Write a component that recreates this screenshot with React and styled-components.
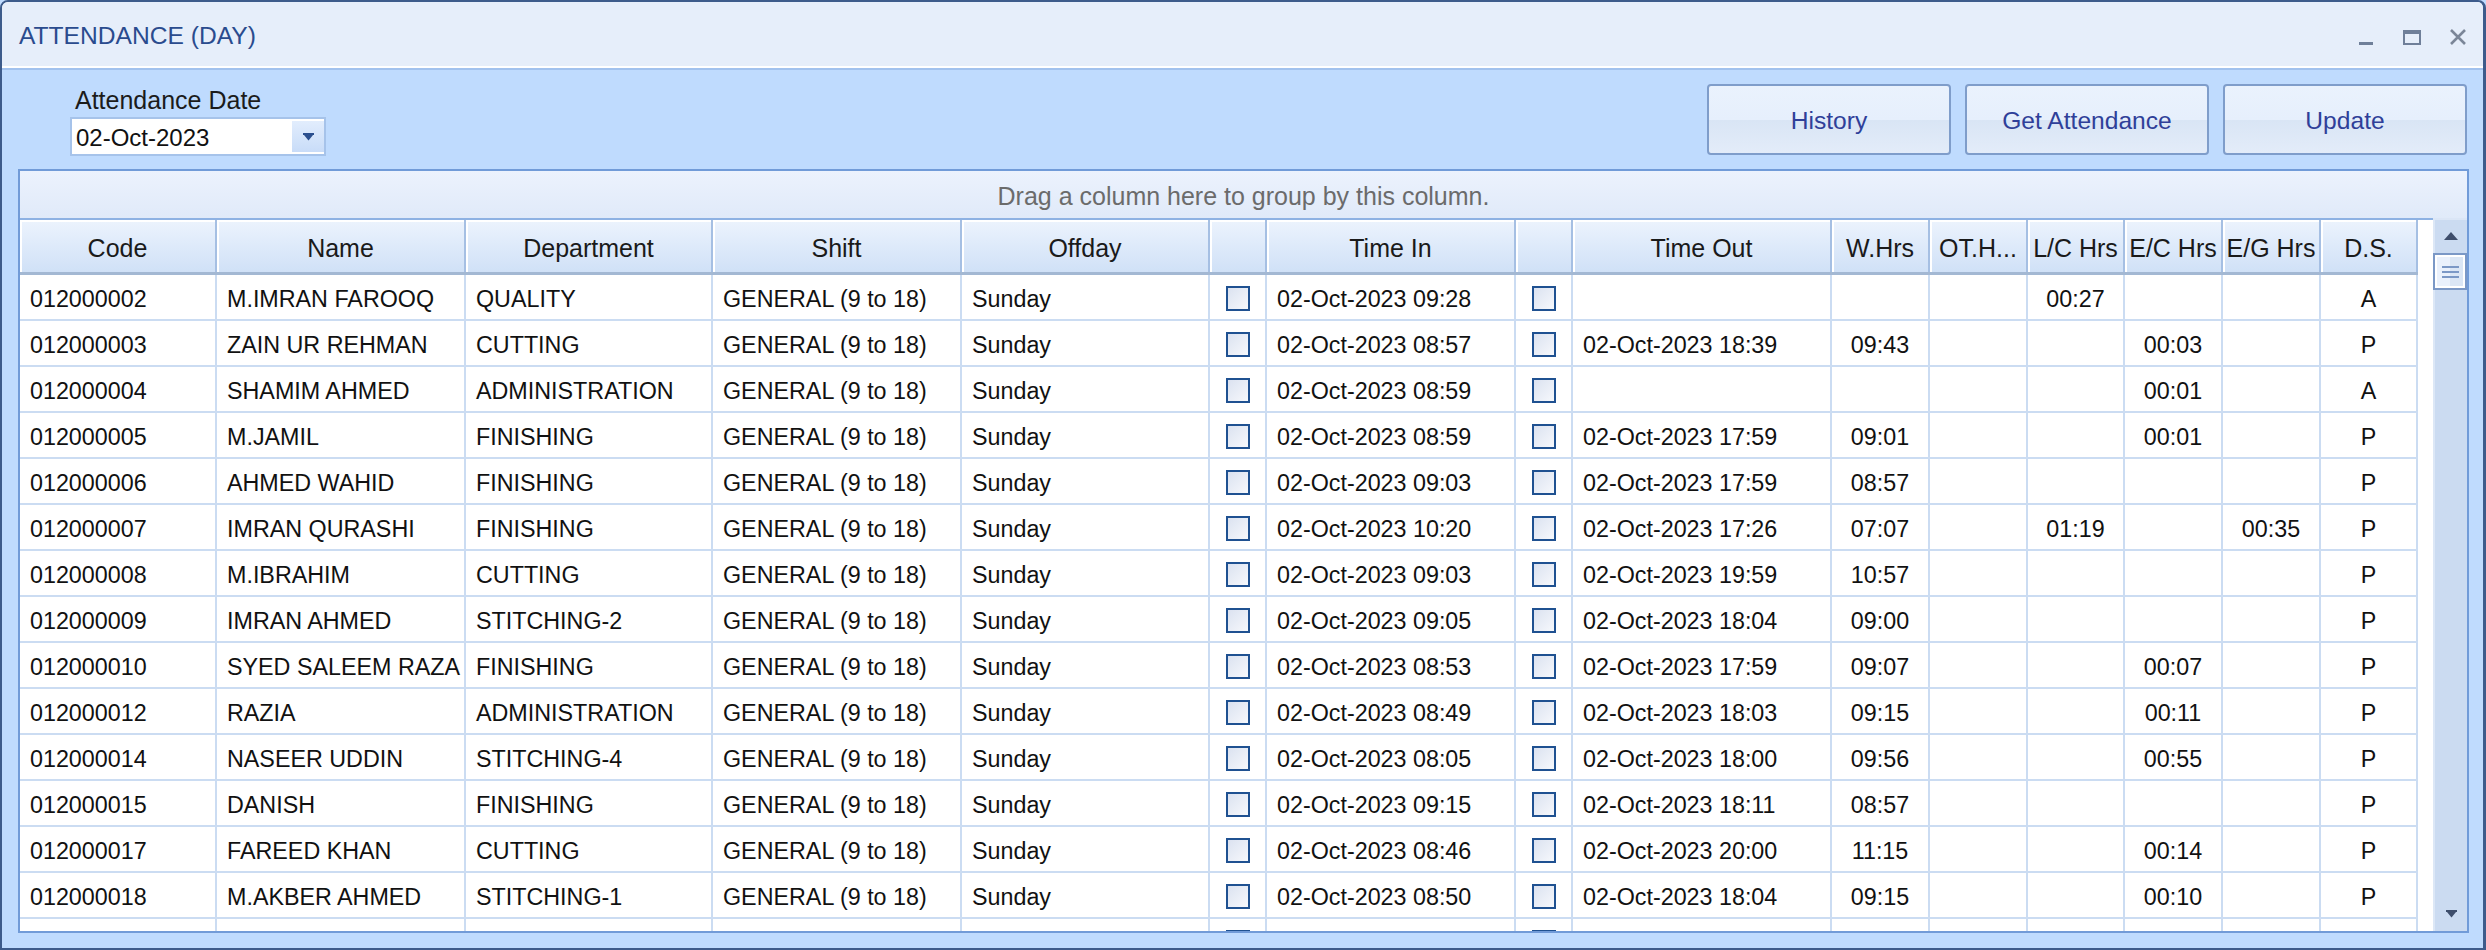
import React from "react";
import styled, { createGlobalStyle } from "styled-components";

const FONT = `"Liberation Sans", Arial, Helvetica, sans-serif`;

const GlobalStyle = createGlobalStyle`
  html, body {
    margin: 0;
    padding: 0;
  }
  body {
    font-family: ${FONT};
    background: #bfdbfe;
    overflow: hidden;
  }
  * {
    box-sizing: border-box;
  }
`;

const COLUMNS = [
  { key: "code", title: "Code", width: 197 },
  { key: "name", title: "Name", width: 249 },
  { key: "dept", title: "Department", width: 247 },
  { key: "shift", title: "Shift", width: 249 },
  { key: "offday", title: "Offday", width: 248 },
  { key: "chkIn", title: "", width: 57, type: "check" },
  { key: "timeIn", title: "Time In", width: 249 },
  { key: "chkOut", title: "", width: 57, type: "check" },
  { key: "timeOut", title: "Time Out", width: 259 },
  { key: "wHrs", title: "W.Hrs", width: 98, align: "center" },
  { key: "otHrs", title: "OT.H...", width: 98, align: "center" },
  { key: "lcHrs", title: "L/C Hrs", width: 97, align: "center" },
  { key: "ecHrs", title: "E/C Hrs", width: 98, align: "center" },
  { key: "egHrs", title: "E/G Hrs", width: 98, align: "center" },
  { key: "ds", title: "D.S.", width: 97, align: "center" },
];

const TEMPLATE = COLUMNS.map((c) => `${c.width}px`).join(" ");

const SHIFT = "GENERAL (9 to 18)";
const DAY = "02-Oct-2023";

// code, name, dept, in, out, w, ot, lc, ec, eg, ds
const RAW = [
  ["012000002", "M.IMRAN FAROOQ", "QUALITY", "09:28", "", "", "", "00:27", "", "", "A"],
  ["012000003", "ZAIN UR REHMAN", "CUTTING", "08:57", "18:39", "09:43", "", "", "00:03", "", "P"],
  ["012000004", "SHAMIM AHMED", "ADMINISTRATION", "08:59", "", "", "", "", "00:01", "", "A"],
  ["012000005", "M.JAMIL", "FINISHING", "08:59", "17:59", "09:01", "", "", "00:01", "", "P"],
  ["012000006", "AHMED WAHID", "FINISHING", "09:03", "17:59", "08:57", "", "", "", "", "P"],
  ["012000007", "IMRAN QURASHI", "FINISHING", "10:20", "17:26", "07:07", "", "01:19", "", "00:35", "P"],
  ["012000008", "M.IBRAHIM", "CUTTING", "09:03", "19:59", "10:57", "", "", "", "", "P"],
  ["012000009", "IMRAN AHMED", "STITCHING-2", "09:05", "18:04", "09:00", "", "", "", "", "P"],
  ["012000010", "SYED SALEEM RAZA", "FINISHING", "08:53", "17:59", "09:07", "", "", "00:07", "", "P"],
  ["012000012", "RAZIA", "ADMINISTRATION", "08:49", "18:03", "09:15", "", "", "00:11", "", "P"],
  ["012000014", "NASEER UDDIN", "STITCHING-4", "08:05", "18:00", "09:56", "", "", "00:55", "", "P"],
  ["012000015", "DANISH", "FINISHING", "09:15", "18:11", "08:57", "", "", "", "", "P"],
  ["012000017", "FAREED KHAN", "CUTTING", "08:46", "20:00", "11:15", "", "", "00:14", "", "P"],
  ["012000018", "M.AKBER AHMED", "STITCHING-1", "08:50", "18:04", "09:15", "", "", "00:10", "", "P"],
];

const ROWS = RAW.map((r) => ({
  code: r[0],
  name: r[1],
  dept: r[2],
  shift: SHIFT,
  offday: "Sunday",
  timeIn: r[3] ? `${DAY} ${r[3]}` : "",
  timeOut: r[4] ? `${DAY} ${r[4]}` : "",
  wHrs: r[5],
  otHrs: r[6],
  lcHrs: r[7],
  ecHrs: r[8],
  egHrs: r[9],
  ds: r[10],
}));

// the next record is scrolled below the edge, only its top few pixels show
ROWS.push({ code: "next" });

const Window = styled.div`
  width: 2486px;
  height: 950px;
  display: flex;
  flex-direction: column;
  border: 2px solid #3d5b8b;
  border-right-width: 3px;
  border-radius: 8px 8px 0 0;
  overflow: hidden;
  background: #e6eefa;
`;

const TitleBar = styled.div`
  height: 66px;
  flex: none;
  display: flex;
  align-items: center;
  justify-content: space-between;
  padding: 4px 16px 0 17px;
  background: #e6eefa;
  border-bottom: 2px solid #ffffff;
`;

const Title = styled.div`
  font-size: 24.6px;
  color: #2a4b8e;
`;

const Controls = styled.div`
  display: flex;
  align-items: flex-end;
  height: 16px;
  margin-top: 2px;
`;

const MinIcon = styled.div`
  width: 14px;
  height: 3px;
  background: #6f7f99;
  margin-right: 30px;
`;

const MaxIcon = styled.div`
  width: 18px;
  height: 15px;
  border: 2px solid #6f7f99;
  border-top-width: 4px;
  margin-right: 28px;
`;

const CloseIcon = () => (
  <svg width="18" height="16" viewBox="0 0 18 16">
    <path d="M2 1 L16 15 M16 1 L2 15" stroke="#7b8698" strokeWidth="2.6" />
  </svg>
);

const Body = styled.div`
  flex: 1;
  min-height: 0;
  display: flex;
  flex-direction: column;
  background: #bfdbfe;
  border-top: 2px solid #a2c2ee;
  padding: 0 14px 15px 16px;
`;

const Toolbar = styled.div`
  height: 99px;
  flex: none;
  display: flex;
  justify-content: space-between;
  align-items: flex-end;
  padding: 0 2px 13px 52px;
`;

const DateGroup = styled.div`
  display: flex;
  flex-direction: column;
`;

const FieldLabel = styled.div`
  font-size: 25px;
  line-height: 28px;
  color: #1b1b1b;
  padding-left: 5px;
  margin-bottom: 3px;
`;

const ComboBox = styled.div`
  width: 256px;
  height: 39px;
  display: flex;
  align-items: stretch;
  background: #ffffff;
  border: 2px solid #a6c3ea;
`;

const ComboText = styled.div`
  flex: 1;
  display: flex;
  align-items: center;
  padding: 3px 0 0 4px;
  font-size: 24px;
  color: #111;
`;

const ComboButton = styled.div`
  width: 32px;
  margin: 2px 0;
  display: flex;
  align-items: center;
  justify-content: center;
  background: linear-gradient(#e2edfd, #c8dcf8);
`;

const DropArrow = ({ color = "#2b4f8e" }) => (
  <svg width="11" height="8" viewBox="0 0 11 8">
    <rect x="0" y="0" width="11" height="2" fill={color} />
    <path d="M1 2 H10 L5.5 7.5 Z" fill={color} />
  </svg>
);

const ButtonRow = styled.div`
  display: flex;
  gap: 14px;
  margin-bottom: 1px;
`;

const ActionButton = styled.button`
  width: 244px;
  height: 71px;
  border: 2px solid #7f9dca;
  border-radius: 4px;
  background: linear-gradient(#eaf2fd 0%, #e6effc 50%, #d9e5f5 51%, #e3ecf9 100%);
  font-family: ${FONT};
  font-size: 24.6px;
  color: #2f3f99;
  padding: 3px 0 0;
  cursor: pointer;
`;

const GridPanel = styled.div`
  flex: 1;
  min-height: 0;
  display: flex;
  flex-direction: column;
  border: 2px solid #719bd8;
  background: #ffffff;
  overflow: hidden;
`;

const GroupPanel = styled.div`
  height: 47px;
  flex: none;
  display: flex;
  align-items: center;
  justify-content: center;
  padding-top: 4px;
  background: linear-gradient(#ecf2fd, #e0eaf9);
  color: #6b6b6b;
  font-size: 25px;
`;

const View = styled.div`
  flex: 1;
  min-height: 0;
  display: flex;
`;

const Columns = styled.div`
  width: 2398px;
  flex: none;
  display: flex;
  flex-direction: column;
  overflow: hidden;
`;

const HeaderRow = styled.div`
  display: grid;
  grid-template-columns: ${TEMPLATE};
  height: 57px;
  flex: none;
  border-top: 2px solid #8eb2e3;
  border-bottom: 3px solid #a3b8d3;
`;

const HeaderCell = styled.div`
  display: flex;
  align-items: center;
  justify-content: center;
  padding-top: 4px;
  background: linear-gradient(#ecf3fd, #d0e1f7);
  border-right: 2px solid #a5bfe3;
  box-shadow: inset 2px 2px 0 #ffffff;
  font-size: 25px;
  color: #1a1a1a;
  white-space: nowrap;
  overflow: hidden;
`;

const DataRow = styled.div`
  display: grid;
  grid-template-columns: ${TEMPLATE};
  height: 46px;
  flex: none;
  border-bottom: 2px solid #cbdcf2;
`;

const Cell = styled.div`
  display: flex;
  align-items: center;
  justify-content: ${(p) => (p.$align === "center" ? "center" : "flex-start")};
  padding: ${(p) => (p.$align === "center" ? "4px 0 0" : "4px 0 0 10px")};
  border-right: 2px solid #cbdcf2;
  font-size: 23.3px;
  color: #111;
  white-space: nowrap;
  overflow: hidden;
`;

const CheckBox = styled.div`
  width: 24px;
  height: 25px;
  margin-top: -2px;
  border: 2px solid #1f5191;
  background: linear-gradient(135deg, #dbe2f0, #f6f8fc);
`;

const Filler = styled.div`
  width: 15px;
  flex: none;
  background: #ffffff;
  border-top: 2px solid #8eb2e3;
`;

const ScrollBar = styled.div`
  width: 34px;
  flex: none;
  display: flex;
  flex-direction: column;
  background: #cbdbf1;
  border-left: 2px solid #dce7f6;
  border-top: 2px solid #dbe6f6;
`;

const ScrollArrow = styled.div`
  height: ${(p) => p.$h}px;
  flex: none;
  display: flex;
  align-items: center;
  justify-content: center;
`;

const Thumb = styled.div`
  height: 37px;
  flex: none;
  margin-left: -2px;
  border: 2px solid #7b98c6;
  background: linear-gradient(90deg, #eaf1fc 50%, #dbe6f5 50%);
  box-shadow: inset 0 0 0 2px #ffffff;
  display: flex;
  flex-direction: column;
  align-items: center;
  justify-content: center;
  gap: 3px;
`;

const GripLine = styled.div`
  width: 17px;
  height: 2px;
  background: #7b98c6;
`;

const Track = styled.div`
  flex: 1;
`;

const UpArrow = () => (
  <svg width="14" height="9" viewBox="0 0 14 9">
    <path d="M7 0 L14 8 H0 Z" fill="#3e4e6c" />
  </svg>
);

const App = () => {
  return (
    <>
      <GlobalStyle />
      <Window>
        <TitleBar>
          <Title>ATTENDANCE (DAY)</Title>
          <Controls>
            <MinIcon />
            <MaxIcon />
            <CloseIcon />
          </Controls>
        </TitleBar>
        <Body>
          <Toolbar>
            <DateGroup>
              <FieldLabel>Attendance Date</FieldLabel>
              <ComboBox>
                <ComboText>02-Oct-2023</ComboText>
                <ComboButton>
                  <DropArrow />
                </ComboButton>
              </ComboBox>
            </DateGroup>
            <ButtonRow>
              <ActionButton>History</ActionButton>
              <ActionButton>Get Attendance</ActionButton>
              <ActionButton>Update</ActionButton>
            </ButtonRow>
          </Toolbar>

          <GridPanel>
            <GroupPanel>Drag a column here to group by this column.</GroupPanel>
            <View>
              <Columns>
                <HeaderRow>
                  {COLUMNS.map((c) => (
                    <HeaderCell key={c.key}>{c.title}</HeaderCell>
                  ))}
                </HeaderRow>
                {ROWS.map((row) => (
                  <DataRow key={row.code}>
                    {COLUMNS.map((c) =>
                      c.type === "check" ? (
                        <Cell key={c.key} $align="center">
                          <CheckBox />
                        </Cell>
                      ) : (
                        <Cell key={c.key} $align={c.align}>
                          {row.code === "next" ? "" : row[c.key]}
                        </Cell>
                      )
                    )}
                  </DataRow>
                ))}
              </Columns>
              <Filler />
              <ScrollBar>
                <ScrollArrow $h={33}>
                  <UpArrow />
                </ScrollArrow>
                <Thumb>
                  <GripLine />
                  <GripLine />
                  <GripLine />
                </Thumb>
                <Track />
                <ScrollArrow $h={34}>
                  <DropArrow color="#3e4e6c" />
                </ScrollArrow>
              </ScrollBar>
            </View>
          </GridPanel>
        </Body>
      </Window>
    </>
  );
};

export default App;
